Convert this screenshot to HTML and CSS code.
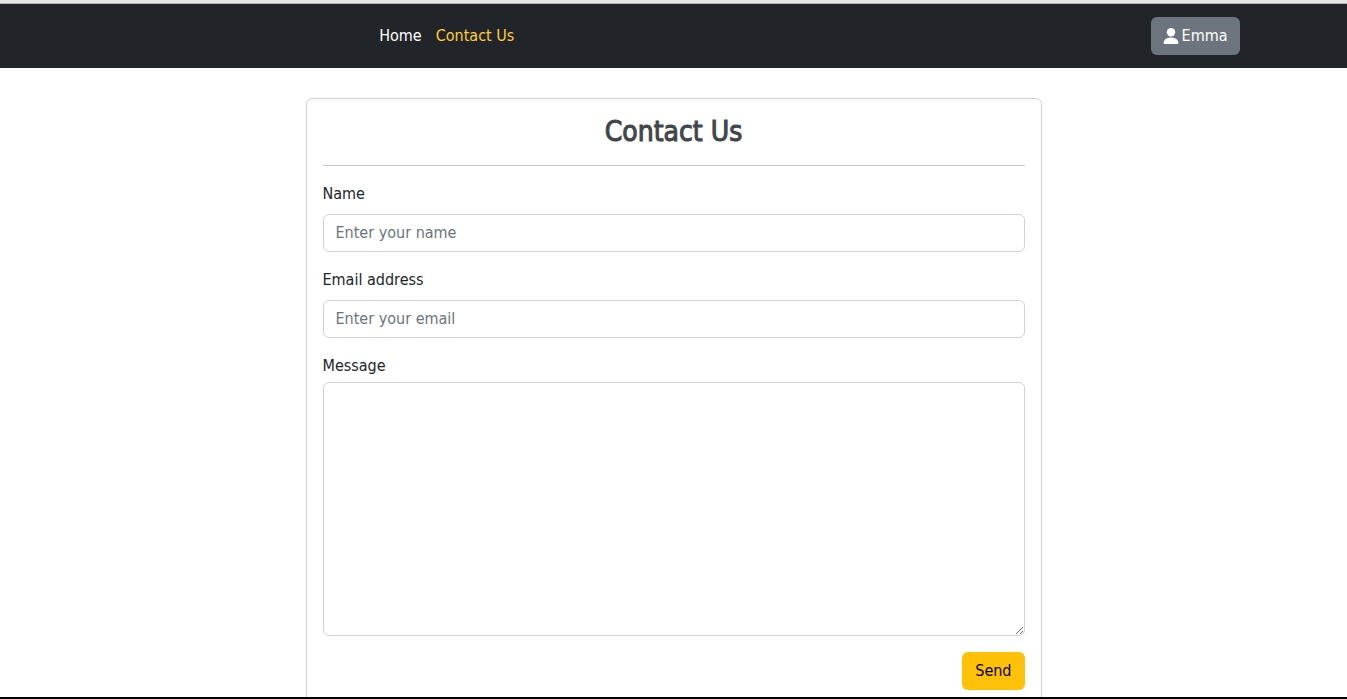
FILE: index.html
```html
<!DOCTYPE html>
<html lang="en">
<head>
<meta charset="utf-8">
<meta name="viewport" content="width=device-width, initial-scale=1">
<title>Contact Us</title>
<link rel="stylesheet" href="styles.css">
</head>
<body>
<div class="page">
  <header class="navbar">
    <div class="navbar-inner">
      <nav class="nav">
        <a class="nav-link" href="#">Home</a>
        <a class="nav-link active" href="#" aria-current="page">Contact Us</a>
      </nav>
      <button class="btn btn-user" type="button">
        <svg class="icon" viewBox="0 0 16 16" aria-hidden="true"><circle cx="8" cy="4.2" r="4.2" fill="currentColor"/><path fill="currentColor" d="M1.8 16S.6 16 .6 14.8 1.8 9.6 8 9.6s7.4 4 7.4 5.2S14.2 16 14.2 16z"/></svg>
        <span>Emma</span>
      </button>
    </div>
  </header>
  <main class="content">
    <form class="card">
      <h1 class="title">Contact Us</h1>
      <hr class="divider">
      <div class="field">
        <label for="name">Name</label>
        <input class="control" id="name" type="text" placeholder="Enter your name">
      </div>
      <div class="field">
        <label for="email">Email address</label>
        <input class="control" id="email" type="email" placeholder="Enter your email">
      </div>
      <div class="field field-message">
        <label for="message">Message</label>
        <textarea class="control" id="message" rows="10"></textarea>
      </div>
      <div class="actions">
        <button class="btn btn-send" type="submit">Send</button>
      </div>
    </form>
  </main>
</div>
</body>
</html>
```
FILE: styles.css
```css
* {
  box-sizing: border-box;
}

body {
  margin: 0;
  color: #212529;
  background: #fff;
  font-family: Tahoma, "DejaVu Sans Condensed", "Noto Sans", sans-serif;
  font-size: 16px;
  line-height: 24px;
}

.page {
  display: flex;
  flex-direction: column;
  height: 100vh;
  overflow: hidden;
  border-top: 3px solid #e6e7e8;
  border-bottom: 2px solid #000;
}

.navbar {
  flex: none;
  padding: 13px 12px;
  background: #212529;
  border-top: 1px solid #b5b8bb;
}

.navbar-inner {
  display: flex;
  align-items: center;
  justify-content: space-between;
  max-width: 1132px;
  margin: 0 auto;
}

.nav {
  display: flex;
  gap: 14px;
  margin-left: 24%;
}

.nav-link {
  color: #fff;
  text-decoration: none;
}

.nav-link.active {
  color: #ffcd39;
}

.btn {
  padding: 6px 12px;
  border: 1px solid transparent;
  border-radius: 6px;
  font: inherit;
  cursor: pointer;
}

.btn-user {
  display: flex;
  align-items: center;
  gap: 3px;
  padding: 6px 11px;
  color: #fff;
  background: #6c757d;
}

.icon {
  width: 16px;
  height: 16px;
}

.btn-send {
  color: #000;
  background: #ffc107;
}

.content {
  flex: 1;
  min-height: 0;
  padding: 30px 12px;
}

.card {
  max-width: 736px;
  margin: 0 auto;
  padding: 16px;
  border: 1px solid #d0d1d4;
  border-radius: 6px;
}

.title {
  margin: 0;
  color: #41464b;
  font-size: 28px;
  font-weight: 500;
  line-height: 34px;
  text-align: center;
  -webkit-text-stroke: 1px currentColor;
}

.divider {
  margin: 16px 0;
  border: 0;
  border-top: 1px solid #c8c9ca;
}

.field {
  display: flex;
  flex-direction: column;
  gap: 8px;
  margin-bottom: 16px;
}

.field-message {
  gap: 4px;
}

.control {
  display: block;
  width: 100%;
  padding: 6px 12px;
  color: inherit;
  background: #fff;
  border: 1px solid #ced4da;
  border-radius: 6px;
  font: inherit;
}

.control::placeholder {
  color: #6c757d;
  opacity: 1;
}

.actions {
  display: flex;
  justify-content: flex-end;
}
```
